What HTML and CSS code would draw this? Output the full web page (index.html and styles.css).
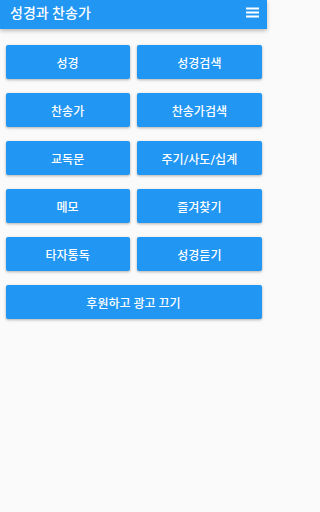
FILE: index.html
```html
<!DOCTYPE html>
<html lang="ko">
<head>
<meta charset="utf-8">
<meta name="viewport" content="width=267">
<link rel="stylesheet" href="styles.css">
</head>
<body>
<div class="page">
<header class="appbar">
  <h1 class="title">성경과 찬송가</h1>
  <svg class="menu" width="13" height="11" viewBox="0 0 13 11"><rect x="0" y="0.5" width="13" height="2" fill="#fff"/><rect x="0" y="4.5" width="13" height="2" fill="#fff"/><rect x="0" y="8.5" width="13" height="2" fill="#fff"/></svg>
</header>
<main class="grid">
  <button class="btn">성경</button>
  <button class="btn">성경검색</button>
  <button class="btn">찬송가</button>
  <button class="btn">찬송가검색</button>
  <button class="btn">교독문</button>
  <button class="btn">주기/사도/십계</button>
  <button class="btn">메모</button>
  <button class="btn">즐겨찾기</button>
  <button class="btn">타자통독</button>
  <button class="btn">성경듣기</button>
  <button class="btn wide">후원하고 광고 끄기</button>
</main>
</div>
</body>
</html>
```
FILE: styles.css
```css
html, body {
  margin: 0;
  padding: 0;
  background: #fafafa;
  font-family: Roboto, "Noto Sans CJK KR", sans-serif;
}
.page {
  width: 267px;
}
.appbar {
  height: 29px;
  background: #2196f3;
  display: flex;
  align-items: center;
  justify-content: space-between;
  padding: 0 8px 0 10px;
  box-shadow: 0 2px 4px rgba(0,0,0,0.25);
  position: relative;
}
.title {
  margin: 0 0 3px 0;
  color: #fff;
  font-size: 14px;
  font-weight: 500;
  line-height: 1;
}
.menu {
  display: block;
  margin-top: -4px;
}
.grid {
  display: grid;
  grid-template-columns: 1fr 1fr;
  column-gap: 7.5px;
  row-gap: 14px;
  padding: 16px 5.5px;
}
.btn {
  height: 34px;
  border: none;
  border-radius: 2px;
  background: #2196f3;
  color: #fff;
  font-family: Roboto, "Noto Sans CJK KR", sans-serif;
  font-size: 12px;
  font-weight: 500;
  box-shadow: 0 1px 3px rgba(0,0,0,0.3);
  padding: 0;
}
.wide {
  grid-column: span 2;
}
```
